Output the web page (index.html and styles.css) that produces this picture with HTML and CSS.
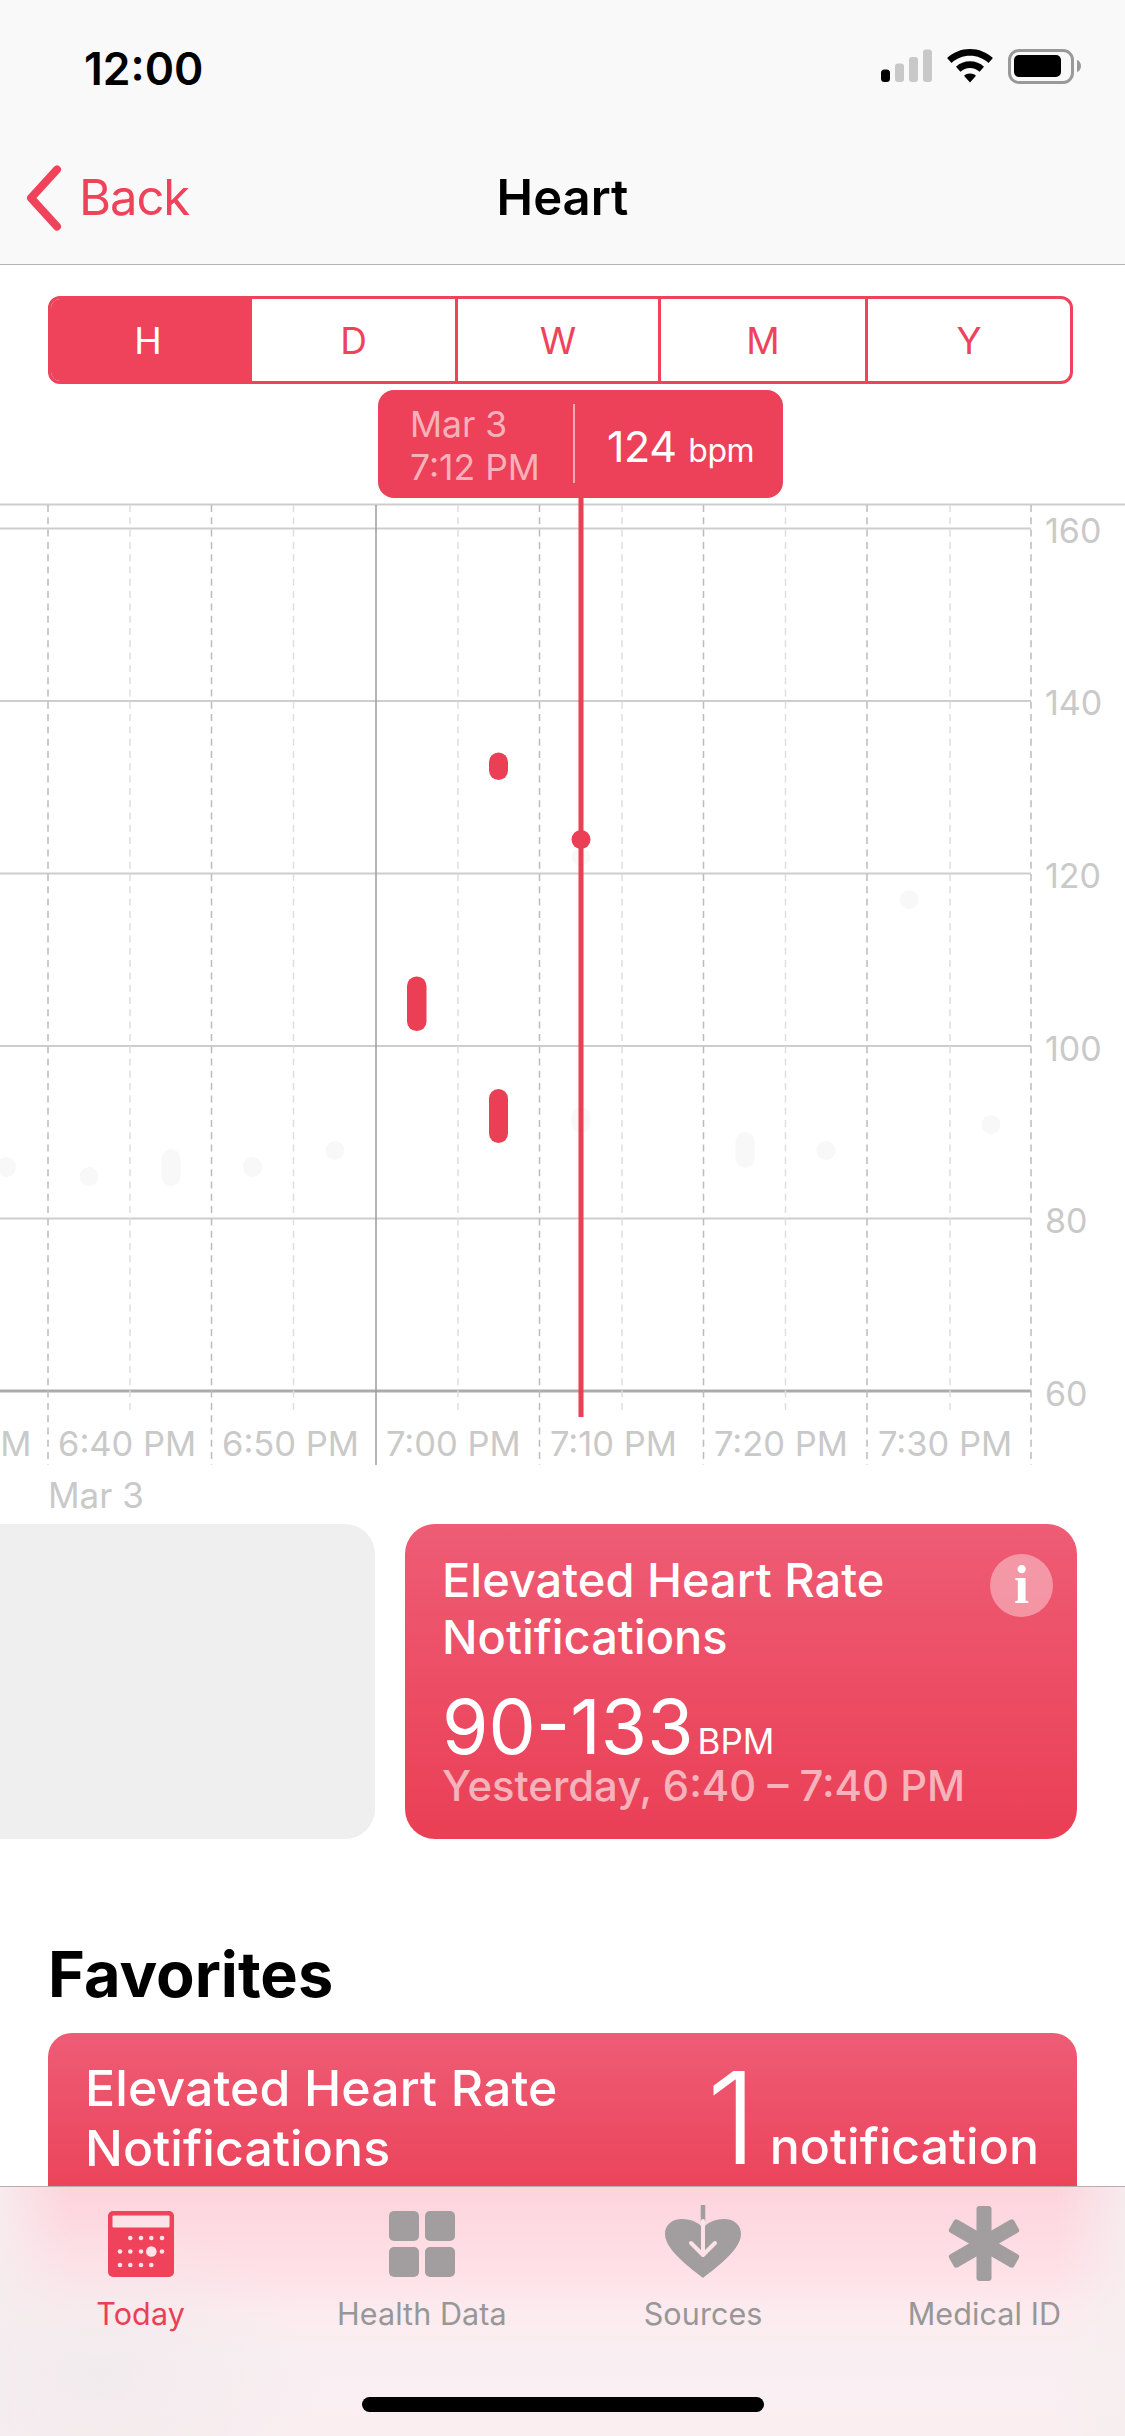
FILE: index.html
```html
<!DOCTYPE html>
<html lang="en">
<head>
    <meta charset="UTF-8">
    <meta name="viewport" content="width=device-width, initial-scale=1.0">
    <title>Heart</title>
    <link rel="stylesheet" href="styles.css">
</head>
<body>
<div class="phone">
    <header class="top-bar">
        <div class="status-bar">
            <span class="clock">12:00</span>
            <svg class="status-icons" width="205" height="40" viewBox="878 50 205 40">
                <rect x="881" y="72.500" width="9" height="12.500" rx="3.500" fill="#000"/>
                <rect x="895" y="66.500" width="9" height="18.500" rx="3" fill="#c8c8c8"/>
                <rect x="909" y="60" width="9" height="25" rx="3" fill="#c8c8c8"/>
                <rect x="923" y="52.500" width="9" height="32.500" rx="3" fill="#c8c8c8"/>
                <path d="M970 52c-8.800 0-16.800 3.400-22.900 8.900l4.400 5c4.900-4.400 11.400-7.100 18.500-7.100s13.600 2.700 18.500 7.100l4.400-5C986.800 55.400 978.800 52 970 52z" fill="#000"/>
                <path d="M970 64.300c-5.400 0-10.300 2-14 5.400l4.400 5c2.600-2.300 6-3.700 9.600-3.700s7 1.400 9.600 3.700l4.400-5c-3.700-3.400-8.600-5.400-14-5.400z" fill="#000"/>
                <path d="M970 76.500c-2.300 0-4.400.8-6 2.300l6 6.600 6-6.600c-1.600-1.500-3.700-2.300-6-2.300z" fill="#000"/>
                <rect x="1009.500" y="53.500" width="63" height="32" rx="9.500" fill="none" stroke="#999" stroke-width="3"/>
                <rect x="1014" y="58" width="47" height="22" rx="5" fill="#000"/>
                <path d="M1077 63c2.500.8 4 3 4 6s-1.500 5.200-4 6z" fill="#999"/>
            </svg>
        </div>
        <nav class="nav-bar">
            <a class="back-link">
                <svg width="40" height="66" viewBox="0 0 40 66">
                    <path d="M33 4.500 7 33l26 28.500" fill="none" stroke="#ee435b" stroke-width="8" stroke-linecap="round" stroke-linejoin="round"/>
                </svg>
                <span>Back</span>
            </a>
            <h1 class="nav-title">Heart</h1>
        </nav>
    </header>

    <main class="content">
        <div class="range-tabs">
            <span class="range-tab active">H</span>
            <span class="range-tab">D</span>
            <span class="range-tab">W</span>
            <span class="range-tab">M</span>
            <span class="range-tab">Y</span>
        </div>

        <section class="chart">
            <svg class="chart-plot" width="1125" height="961" viewBox="0 504 1125 961">
                <g class="grid-h">
                    <line x1="0" x2="1125" y1="504.500" y2="504.500"/>
                    <line x1="0" x2="1031" y1="528.500" y2="528.500"/>
                    <line x1="0" x2="1031" y1="701" y2="701"/>
                    <line x1="0" x2="1031" y1="873.500" y2="873.500"/>
                    <line x1="0" x2="1031" y1="1046" y2="1046"/>
                    <line x1="0" x2="1031" y1="1218.500" y2="1218.500"/>
                    <line class="grid-base" x1="0" x2="1031" y1="1391" y2="1391"/>
                </g>
                <g class="grid-minor">
                    <line x1="130" x2="130" y1="505" y2="1410"/>
                    <line x1="293.500" x2="293.500" y1="505" y2="1410"/>
                    <line x1="458" x2="458" y1="505" y2="1410"/>
                    <line x1="622" x2="622" y1="505" y2="1410"/>
                    <line x1="785.500" x2="785.500" y1="505" y2="1410"/>
                    <line x1="950" x2="950" y1="505" y2="1410"/>
                </g>
                <g class="grid-major">
                    <line x1="48" x2="48" y1="505" y2="1465"/>
                    <line x1="211.500" x2="211.500" y1="505" y2="1465"/>
                    <line x1="539.500" x2="539.500" y1="505" y2="1465"/>
                    <line x1="703.500" x2="703.500" y1="505" y2="1465"/>
                    <line x1="867" x2="867" y1="505" y2="1465"/>
                    <line x1="1031" x2="1031" y1="505" y2="1465"/>
                </g>
                <line class="grid-hour" x1="376" x2="376" y1="505" y2="1465"/>
                <g class="samples-dim">
                    <rect x="-3" y="1157" width="19" height="20" rx="9.500"/>
                    <rect x="79.500" y="1167" width="19" height="19" rx="9.500"/>
                    <rect x="161.500" y="1149" width="19" height="37" rx="9.500"/>
                    <rect x="243" y="1157" width="19" height="20" rx="9.500"/>
                    <rect x="325.500" y="1141" width="19" height="19" rx="9.500"/>
                    <rect x="571.500" y="849" width="19" height="16" rx="8"/>
                    <rect x="571.500" y="1107" width="19" height="26" rx="9.500"/>
                    <rect x="735.500" y="1132" width="19" height="36" rx="9.500"/>
                    <rect x="816.500" y="1141" width="19" height="19" rx="9.500"/>
                    <rect x="899.500" y="890" width="19" height="19" rx="9.500"/>
                    <rect x="981.500" y="1115" width="19" height="19" rx="9.500"/>
                </g>
                <line class="cursor" x1="581" x2="581" y1="494" y2="1417"/>
                <circle class="samples" cx="581" cy="839.500" r="9.500"/>
                <g class="samples">
                    <rect x="489" y="752.500" width="19" height="27.500" rx="9.500"/>
                    <rect x="407" y="976.500" width="19.500" height="54.500" rx="9.500"/>
                    <rect x="489" y="1089" width="19" height="54" rx="9.500"/>
                </g>
            </svg>

            <div class="y-axis">
                <span>160</span>
                <span>140</span>
                <span>120</span>
                <span>100</span>
                <span>80</span>
                <span>60</span>
            </div>
            <div class="x-axis">
                <span>6:30 PM</span>
                <span>6:40 PM</span>
                <span>6:50 PM</span>
                <span>7:00 PM</span>
                <span>7:10 PM</span>
                <span>7:20 PM</span>
                <span>7:30 PM</span>
            </div>

            <div class="readout">
                <div class="readout-when">
                    <span>Mar 3</span>
                    <span>7:12 PM</span>
                </div>
                <div class="readout-value">124 <small>bpm</small></div>
            </div>
        </section>

        <p class="chart-date">Mar 3</p>

        <div class="cards">
            <div class="card card-empty"></div>
            <div class="card card-red">
                <div class="card-info">i</div>
                <h2 class="card-title">Elevated Heart Rate Notifications</h2>
                <div class="card-range">90-133<small>BPM</small></div>
                <div class="card-when">Yesterday, 6:40 – 7:40 PM</div>
            </div>
        </div>

        <h2 class="section-title">Favorites</h2>
        <div class="favorite">
            <div class="favorite-title">Elevated Heart Rate<br>Notifications</div>
            <div class="favorite-count"><b>1</b><span>notification</span></div>
        </div>
    </main>

    <footer class="tab-bar">
        <div class="tabs">
            <div class="tab active">
                <svg width="80" height="80" viewBox="100 2205 80 80">
                    <rect x="107" y="2211" width="66" height="66" rx="5" fill="#ee435b"/>
                    <rect x="111.500" y="2215.500" width="57" height="12" rx="1" fill="#fde3e8"/>
                    <g fill="#fde3e8">
                        <circle cx="129.300" cy="2238" r="2.300"/><circle cx="140" cy="2238" r="2.300"/><circle cx="150.300" cy="2238" r="2.300"/><circle cx="161" cy="2238" r="2.300"/>
                        <circle cx="119" cy="2251.500" r="2.300"/><circle cx="129.300" cy="2251.500" r="2.300"/><circle cx="140" cy="2251.500" r="2.300"/><circle cx="150.300" cy="2251.500" r="5.300"/><circle cx="161" cy="2251.500" r="2.300"/>
                        <circle cx="119" cy="2265" r="2.300"/><circle cx="129.300" cy="2265" r="2.300"/><circle cx="140" cy="2265" r="2.300"/><circle cx="150.300" cy="2265" r="2.300"/>
                    </g>
                </svg>
                <span>Today</span>
            </div>
            <div class="tab">
                <svg width="80" height="80" viewBox="382 2205 80 80" fill="#a29e9f">
                    <rect x="389" y="2211" width="30" height="30" rx="5"/>
                    <rect x="425" y="2211" width="30" height="30" rx="5"/>
                    <rect x="389" y="2247" width="30" height="30" rx="5"/>
                    <rect x="425" y="2247" width="30" height="30" rx="5"/>
                </svg>
                <span>Health Data</span>
            </div>
            <div class="tab">
                <svg width="80" height="80" viewBox="663 2205 80 80">
                    <path d="M703 2278c-4-4-38-26-38-44 0-9 7-15 17-15 10 0 17 4 21 9 4-5 11-9 21-9 10 0 17 6 17 15 0 18-34 40-38 44z" fill="#a29e9f"/>
                    <path d="M703 2205v16" fill="none" stroke="#a29e9f" stroke-width="4.500" stroke-linecap="round"/>
                    <path d="M703 2221v33M691 2243l12 12 12-12" fill="none" stroke="#fde3e8" stroke-width="4" stroke-linecap="round" stroke-linejoin="round"/>
                </svg>
                <span>Sources</span>
            </div>
            <div class="tab">
                <svg width="80" height="80" viewBox="944 2205 80 80" fill="#a29e9f">
                    <rect x="976.500" y="2206" width="15" height="75" rx="3"/>
                    <rect x="976.500" y="2206" width="15" height="75" rx="3" transform="rotate(60 984 2243.500)"/>
                    <rect x="976.500" y="2206" width="15" height="75" rx="3" transform="rotate(-60 984 2243.500)"/>
                </svg>
                <span>Medical ID</span>
            </div>
        </div>
        <div class="home-indicator"></div>
    </footer>
</div>
</body>
</html>
```

FILE: styles.css
```css
html, body { margin: 0; padding: 0; background: #fff; }
body { font-family: Inter, "Noto Sans", Arial, sans-serif; color: #000; }
h1, h2, p { margin: 0; font-weight: normal; }

.phone { width: 1125px; height: 2436px; display: flex; flex-direction: column; overflow: hidden; }

/* top */
.top-bar { height: 265px; flex: none; box-sizing: border-box; background: #f9f9f9; border-bottom: 1px solid #b4b4b4; }
.status-bar { height: 137px; display: flex; align-items: center; justify-content: space-between; padding: 0 42px 0 84px; box-sizing: border-box; }
.clock { font-size: 44.500px; font-weight: 600; }
.status-icons { display: block; margin-top: -4px; }
.nav-bar { height: 127px; display: grid; grid-template-columns: 1fr auto 1fr; align-items: center; padding-bottom: 6px; box-sizing: border-box; }
.back-link { display: flex; align-items: center; gap: 15px; padding-left: 24px; color: #ee435b; font-size: 49px; letter-spacing: -1.1px; }
.back-link svg { display: block; }
.nav-title { font-size: 49px; font-weight: 600; }

/* H D W M Y */
.content { flex: 1; min-height: 0; overflow: hidden; }
.range-tabs { display: grid; grid-template-columns: 198px 206px 203px 207px 1fr; box-sizing: border-box; width: 1025px; height: 88px; margin: 31px 0 0 48px; border: 3px solid #ee435b; border-radius: 12px; overflow: hidden; }
.range-tab { box-sizing: border-box; display: flex; align-items: center; justify-content: center; color: #ee435b; font-size: 37px; border-left: 3px solid #ee435b; }
.range-tab:first-child { padding-right: 4px; border-left: 0; }
.range-tab.active { background: #ee435b; color: #fff; }

/* chart */
.chart { position: relative; width: 1125px; height: 961px; margin-top: 120px; }
.chart-plot { display: block; overflow: visible; }
.grid-h line { stroke: #cdcdcd; stroke-width: 2; }
.grid-h .grid-base { stroke: #ababab; stroke-width: 3; }
.grid-minor line { stroke: #dedede; stroke-width: 1.5; stroke-dasharray: 7 5.300; }
.grid-major line { stroke: #bcbcbc; stroke-width: 1.5; stroke-dasharray: 7 5.300; }
.grid-hour { stroke: #9c9c9c; stroke-width: 1.500; }
.samples-dim { fill: #f8f8f8; }
.samples { fill: #ea3f55; }
.cursor { stroke: #ea3f55; stroke-width: 5; }

.y-axis { position: absolute; left: 1045px; top: -60px; display: grid; grid-auto-rows: 172.6px; align-items: center; color: #c9c9c9; font-size: 34px; }
.x-axis { position: absolute; left: -116px; top: 919px; display: flex; color: #c9c9c9; font-size: 34.500px; }
.x-axis span { width: 164px; padding-left: 10px; box-sizing: border-box; white-space: nowrap; }

.readout { position: absolute; left: 378px; top: -114px; width: 405px; height: 108px; box-sizing: border-box; padding: 14px 0 0 32px; background: #ec4158; border-radius: 16px; display: flex; color: #fff; }
.readout-when { width: 163px; height: 76px; padding-top: 3px; box-sizing: content-box; margin-bottom: -3px; border-right: 2px solid rgba(255, 255, 255, 0.55); display: flex; flex-direction: column; gap: 7px; color: rgba(255, 255, 255, 0.6); font-size: 35.500px; line-height: 36px; white-space: nowrap; }
.readout-value { padding: 16px 0 0 32px; font-size: 43px; line-height: 52px; letter-spacing: -0.4px; white-space: nowrap; }
.readout-value small { font-size: 32px; letter-spacing: -0.5px; }

.chart-date { margin: 10px 0 0 48px; color: #c9c9c9; font-size: 35px; line-height: 40px; }

/* cards */
.cards { display: flex; gap: 30px; margin: 9px 0 0 -30px; }
.card { box-sizing: border-box; height: 315px; border-radius: 30px; flex: none; }
.card-empty { width: 405px; background: #efefef; }
.card-red { position: relative; width: 672px; padding: 28px 0 0 37px; background: linear-gradient(#ee5c75, #ea3f55); color: #fff; }
.card-info { position: absolute; right: 24px; top: 30px; width: 63px; height: 63px; border-radius: 50%; background: rgba(255, 255, 255, 0.38); text-align: center; font-family: "Liberation Serif", serif; font-weight: bold; font-size: 54px; line-height: 62px; }
.card-title { width: 480px; font-size: 47px; font-weight: 500; line-height: 56.500px; }
.card-range { margin-top: 37px; font-size: 75px; font-weight: 400; line-height: 50px; }
.card-range small { margin-left: 4px; font-size: 35px; }
.card-when { color: rgba(255, 255, 255, 0.6); font-size: 41.800px; font-weight: 500; line-height: 40px; white-space: nowrap; }

.section-title { margin: 99px 0 0 48px; font-size: 63px; font-weight: 700; line-height: 72px; }

.favorite { box-sizing: border-box; width: 1029px; height: 260px; margin: 23px 0 0 48px; padding: 25px 38px 0 37px; border-radius: 24px; background: linear-gradient(#ee5c75, #ea3f55 190px); color: #fff; display: flex; justify-content: space-between; }
.favorite-title { font-size: 50px; font-weight: 500; line-height: 60px; letter-spacing: 0.1px; }
.favorite-count { display: flex; align-items: baseline; height: 120px; margin-top: 10px; font-size: 50px; font-weight: 500; }
.favorite-count b { margin-right: 13px; font-size: 128px; font-weight: 300; line-height: 100px; }

/* bottom tabs */
.tab-bar { position: relative; flex: none; height: 250px; box-sizing: border-box; border-top: 1px solid #b5aeb0;
    background:
        radial-gradient(220px 160px at 100px 190px, rgba(240, 234, 236, 0.8), rgba(240, 234, 236, 0)),
        linear-gradient(to right, rgba(246, 238, 240, 0.85), rgba(246, 238, 240, 0) 70px, rgba(246, 238, 240, 0) 1055px, rgba(246, 238, 240, 0.85)),
        linear-gradient(#fdd3dc, #fee0e6 80px, #fcebef 125px, #f9eff2 170px, #faeef1);
}
.tabs { display: grid; grid-template-columns: repeat(4, 1fr); padding-top: 18px; }
.tab { display: flex; flex-direction: column; align-items: center; color: #979797; font-size: 30.500px; line-height: 36px; letter-spacing: 0.1px; }
.tab svg { display: block; margin-bottom: 11px; }
.tab.active { color: #ea3f55; }
.home-indicator { position: absolute; left: 362px; bottom: 24px; width: 402px; height: 15px; border-radius: 8px; background: #000; }
```
